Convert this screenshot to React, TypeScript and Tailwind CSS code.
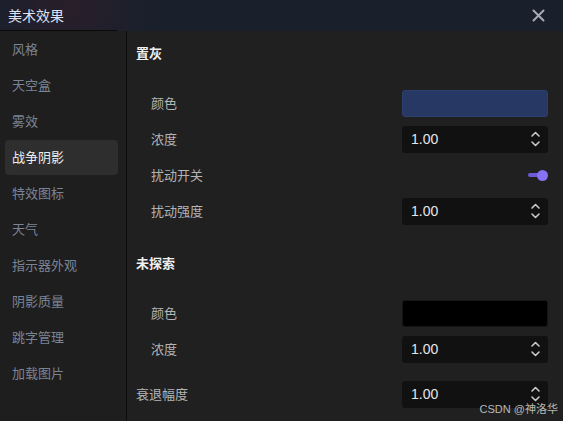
import React from 'react';

const font = { fontFamily: '"Noto Sans CJK SC", "Liberation Sans", sans-serif' };

const menu = ['风格', '天空盒', '雾效', '战争阴影', '特效图标', '天气', '指示器外观', '阴影质量', '跳字管理', '加载图片'];

function Spinner({ value }: { value: string }) {
    return (
        <div className="flex items-center justify-between w-[146px] h-[27px] rounded-[3px] bg-[#111111] pl-[9px] pr-[7px]">
            <span className="text-[14px] text-[#e6e6e6]" style={{ fontFamily: '"Liberation Sans", sans-serif' }}>{value}</span>
            <svg width="11" height="20" viewBox="0 0 11 20" fill="none" stroke="#c8c8c8" strokeWidth="1.6" strokeLinecap="round" strokeLinejoin="round">
                <path d="M2 7 L5.5 3.5 L9 7" />
                <path d="M2 13 L5.5 16.5 L9 13" />
            </svg>
        </div>
    );
}

function Row({ label, indent = true, children }: { label: string; indent?: boolean; children: React.ReactNode }) {
    return (
        <div className="flex items-center justify-between h-[36px]">
            <span className={`text-[13px] text-[#b4b4b4] ${indent ? 'pl-[15px]' : ''}`}>{label}</span>
            {children}
        </div>
    );
}

export default function App() {
    return (
        <div className="relative w-[563px] h-[421px] overflow-hidden bg-[#202020]" style={font}>
            {/* Header */}
            <div className="flex items-center justify-between h-[31px] pl-[8px] pr-[18px] bg-[#1a1f2c] bg-[radial-gradient(circle_at_70px_6px,rgba(110,30,35,0.18),transparent_80px)]">
                <span className="text-[14px] text-[#dde2f2]">美术效果</span>
                <svg width="13" height="13" viewBox="0 0 13 13" stroke="#a6a9b6" strokeWidth="2" strokeLinecap="round">
                    <path d="M1.5 1.5 L11.5 11.5 M11.5 1.5 L1.5 11.5" />
                </svg>
            </div>

            <div className="flex h-[390px]">
                {/* Sidebar */}
                <div className="w-[127px] shrink-0 bg-[#1e1e1e] border-r border-[#0c0c0c]">
                    <div className="w-[117px] border-t border-[#0a0a0a] -mt-px" />
                    {menu.map((m) => (
                        <div key={m} className="h-[36px] flex items-center">
                            <div
                                className={`mx-[5px] w-[113px] h-[35px] flex items-center pl-[7px] rounded-[4px] text-[13px] ${
                                    m === '战争阴影' ? 'bg-[#2e2e2e] text-[#eeeeee]' : 'text-[#7b8495]'
                                }`}
                            >
                                {m}
                            </div>
                        </div>
                    ))}
                </div>

                {/* Content */}
                <div className="flex-1 pl-[9px] pr-[15px] pt-[4px]">
                    <div className="h-[36px] flex items-center text-[13px] font-bold text-[#f0f0f0]">置灰</div>
                    <div className="mt-[14px]">
                        <Row label="颜色">
                            <div className="w-[146px] h-[27px] rounded-[3px] bg-[#263863] border border-[#2c4070]" />
                        </Row>
                        <Row label="浓度">
                            <Spinner value="1.00" />
                        </Row>
                        <Row label="扰动开关">
                            <div className="w-[146px] flex justify-end">
                                <div className="relative w-[20px] h-[11px] flex items-center">
                                    <div className="w-[16px] h-[4px] rounded-full bg-[#6c5ad6]" />
                                    <div className="absolute right-0 w-[11px] h-[11px] rounded-full bg-[#8672f4]" />
                                </div>
                            </div>
                        </Row>
                        <Row label="扰动强度">
                            <Spinner value="1.00" />
                        </Row>
                    </div>

                    <div className="mt-[16px] h-[36px] flex items-center text-[13px] font-bold text-[#f0f0f0]">未探索</div>
                    <div className="mt-[14px]">
                        <Row label="颜色">
                            <div className="w-[146px] h-[27px] rounded-[3px] bg-[#000000] border border-[#151515]" />
                        </Row>
                        <Row label="浓度">
                            <Spinner value="1.00" />
                        </Row>
                    </div>
                    <div className="mt-[9px]">
                        <Row label="衰退幅度" indent={false}>
                            <Spinner value="1.00" />
                        </Row>
                    </div>
                </div>
            </div>

            {/* Watermark */}
            <div className="absolute right-[5px] bottom-[4px] text-[11px] text-[#b8b8b8]" style={{ fontFamily: '"Liberation Sans", "Noto Sans CJK SC", sans-serif' }}>
                CSDN @神洛华
            </div>
        </div>
    );
}
